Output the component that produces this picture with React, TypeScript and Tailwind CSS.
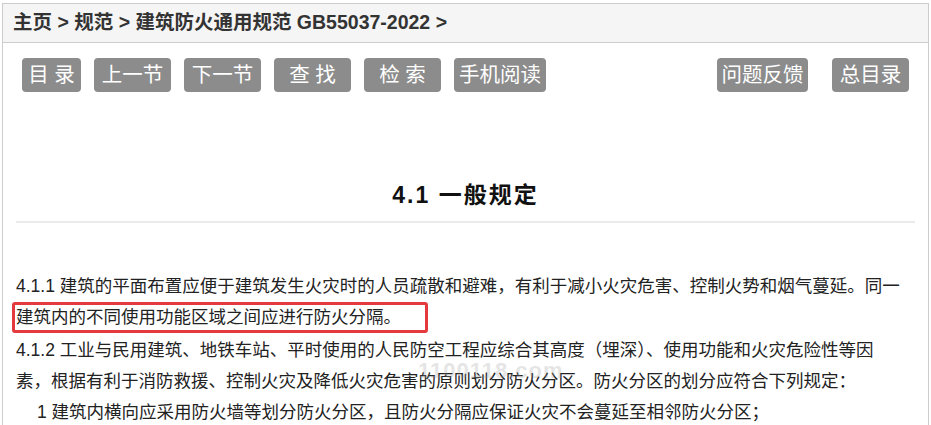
const leftButtons = [
  { label: '目 录', w: 'w-[59px]' },
  { label: '上一节', w: 'w-[77px]' },
  { label: '下一节', w: 'w-[77px]' },
  { label: '查 找', w: 'w-[77px]' },
  { label: '检 索', w: 'w-[77px]' },
  { label: '手机阅读', w: 'w-[92px]' }
];

const rightButtons = [
  { label: '问题反馈', w: 'w-[91px]' },
  { label: '总目录', w: 'w-[77px]' }
];

function ToolButton({ label, w }: { label: string; w: string }) {
  return (
    <button
      type="button"
      className={`${w} flex h-[34px] items-center justify-center rounded-[4px] bg-[#8c8c8c] text-[20.5px] leading-none text-white`}
    >
      {label}
    </button>
  );
}

export default function App() {
  return (
    <div
      className="h-[425px] overflow-hidden bg-white px-[2px] pt-[3px] text-[#222]"
      style={{ fontFamily: '"Liberation Sans", "Noto Sans CJK SC", sans-serif' }}
    >
      <div className="border border-b-0 border-[#ccc] pb-10">
        {/* breadcrumb */}
        <div className="flex h-[39px] items-center border-b border-[#ccc] bg-[#f5f5f5] pl-[10px] text-[19.5px] font-bold text-[#333]">
          主页 &gt; 规范 &gt; 建筑防火通用规范 GB55037-2022 &gt;
        </div>

        {/* toolbar */}
        <div className="flex items-center justify-between px-[19px] pt-[15px]">
          <div className="flex gap-[13px]">
            {leftButtons.map((b) => (
              <ToolButton key={b.label} {...b} />
            ))}
          </div>
          <div className="flex gap-[24px]">
            {rightButtons.map((b) => (
              <ToolButton key={b.label} {...b} />
            ))}
          </div>
        </div>

        <div className="px-[13px]">
          <h1 className="mt-[88px] text-center text-[23px] font-bold leading-[30px] tracking-[2px] text-[#111]">
            4.1 一般规定
          </h1>
          <hr className="mt-[11px] border-0 border-t-2 border-[#ebebeb]" />

          <div className="relative mt-[48px] text-[17.5px] leading-[31px]">
            <p className="relative">
              4.1.1 建筑的平面布置应便于建筑发生火灾时的人员疏散和避难，有利于减小火灾危害、控制火势和烟气蔓延。同一建筑内的不同使用功能区域之间应进行防火分隔。
              <span className="pointer-events-none absolute left-[-4px] top-[31px] h-[31px] w-[416px] rounded-[3px] border-[3px] border-[#e4393e]" />
            </p>
            <p className="mt-[2px]">
              4.1.2 工业与民用建筑、地铁车站、平时使用的人民防空工程应综合其高度（埋深）、使用功能和火灾危险性等因
              <br />
              素，根据有利于消防救援、控制火灾及降低火灾危害的原则划分防火分区。防火分区的划分应符合下列规定：
            </p>
            <p className="pl-[21px]">
              1 建筑内横向应采用防火墙等划分防火分区，且防火分隔应保证火灾不会蔓延至相邻防火分区；
            </p>
            <span className="pointer-events-none absolute left-[402px] top-[84px] select-none text-[22px] font-bold tracking-[1px] text-[#9a9a9a] opacity-25">
              1100118.com
            </span>
          </div>
        </div>
      </div>
    </div>
  );
}
